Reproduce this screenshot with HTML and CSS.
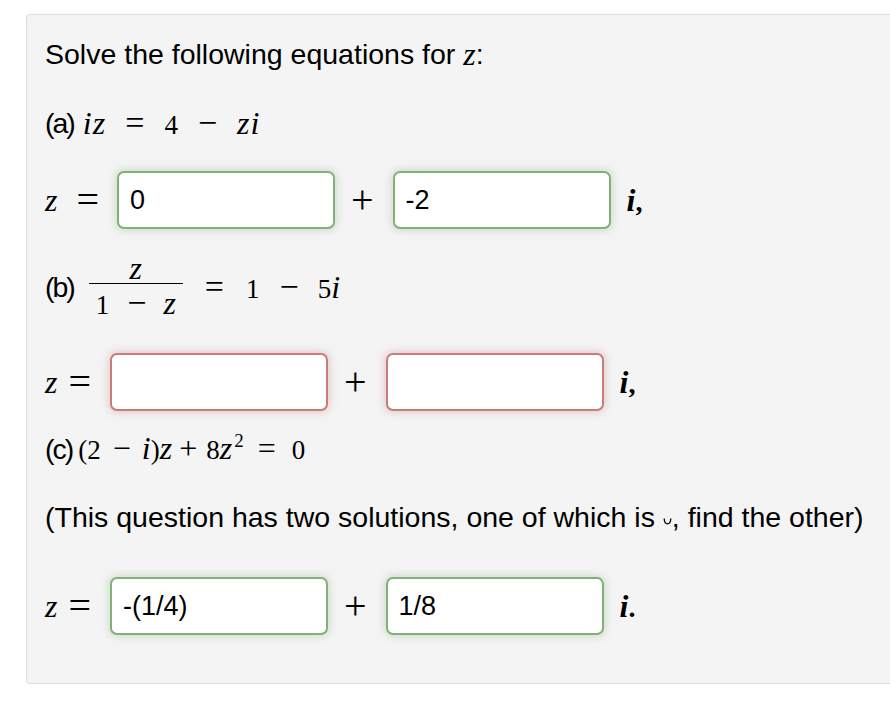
FILE: index.html
```html
<!DOCTYPE html>
<html>
<head>
<meta charset="utf-8">
<link rel="stylesheet" href="styles.css">
</head>
<body>
<div class="panel">
  <p class="row title">Solve the following equations for&nbsp;<span class="mi">z</span>:</p>

  <p class="row eq eq-a"><span class="label">(a)</span><span class="math"><span class="mi">i</span><span class="mi">z</span><span class="mo">=</span><span class="mn">4</span><span class="mo">−</span><span class="mi">z</span><span class="mi">i</span></span></p>

  <div class="row ans ans-a">
    <span class="mi">z</span><span class="mo eqa">=</span>
    <input class="box ok" type="text" value="0">
    <span class="mo plus">+</span>
    <input class="box ok" type="text" value="-2">
    <span class="tail"><span class="mi">i</span>,</span>
  </div>

  <div class="row eq eq-b"><span class="label">(b)</span>
    <span class="frac">
      <span class="num"><span class="mi">z</span></span>
      <span class="den"><span class="mn">1</span><span class="mo">−</span><span class="mi">z</span></span>
    </span>
    <span class="math"><span class="mo first">=</span><span class="mn">1</span><span class="mo">−</span><span class="mn">5</span><span class="mi">i</span></span>
  </div>

  <div class="row ans ans-b">
    <span class="mi">z</span><span class="mo eqb">=</span>
    <input class="box bad" type="text" value="">
    <span class="mo plus">+</span>
    <input class="box bad" type="text" value="">
    <span class="tail"><span class="mi">i</span>,</span>
  </div>

  <p class="row eq eq-c"><span class="label">(c)</span><span class="math"><span class="mn">(2</span><span class="mo m1">−</span><span class="mi">i</span><span class="mn">)</span><span class="mi">z</span><span class="mo m2">+</span><span class="mn">8</span><span class="mi">z</span><span class="sup">2</span><span class="mo m3">=</span><span class="mn">0</span></span></p>

  <p class="row note">(This question has two solutions, one of which is&nbsp;<svg class="cup" width="9" height="7" viewBox="0 0 9 7"><path d="M1.2 0.5 Q1.4 5.8 4.5 5.8 Q7.6 5.8 7.8 0.5" fill="none" stroke="#000" stroke-width="1.3"/></svg>, find the other)</p>

  <div class="row ans ans-c">
    <span class="mi">z</span><span class="mo eqb">=</span>
    <input class="box ok" type="text" value="-(1/4)">
    <span class="mo plus">+</span>
    <input class="box ok" type="text" value="1/8">
    <span class="tail"><span class="mi">i</span>.</span>
  </div>
</div>
</body>
</html>
```

FILE: styles.css
```css
html, body {
  margin: 0;
  padding: 0;
  background: #ffffff;
  overflow: hidden;
}

body {
  font-family: "Liberation Sans", Arial, sans-serif;
  color: #000;
}

.panel {
  margin: 14px 0 0 26px;
  width: 900px;
  height: 670px;
  box-sizing: border-box;
  border: 1px solid #dedede;
  border-right: none;
  border-radius: 4px 0 0 4px;
  background: #f4f4f4;
  padding: 0 0 0 18px;
  font-size: 28.5px;
}

.row {
  margin: 0;
  display: flex;
  align-items: center;
  white-space: nowrap;
}

.title {
  margin-top: 23px;
  height: 32px;
  line-height: 32px;
}

.label {
  letter-spacing: -2px;
}

.eq {
  line-height: 32px;
}

.eq-a {
  margin-top: 37px;
  height: 32px;
}

.ans-a {
  margin-top: 32px;
  height: 58px;
}

.eq-b {
  margin-top: 25px;
  height: 66px;
}

.ans-b {
  margin-top: 33px;
  height: 58px;
}

.eq-c {
  margin-top: 22px;
  height: 32px;
}

.note {
  margin-top: 36px;
  height: 32px;
  line-height: 32px;
}

.ans-c {
  margin-top: 44px;
  height: 58px;
}

/* math */
.math {
  display: inline-flex;
  align-items: baseline;
  font-family: "Liberation Serif", "Times New Roman", serif;
  font-size: 28px;
}

.mi {
  font-family: "Liberation Serif", "Times New Roman", serif;
  font-style: italic;
  font-size: 32px;
}

.mn {
  font-family: "Liberation Serif", "Times New Roman", serif;
  font-size: 27px;
}

.mo {
  font-family: "Liberation Serif", "Times New Roman", serif;
  font-size: 34px;
  margin: 0 20px;
  line-height: 1;
}

.eq-a .math {
  margin-left: 9px;
}

.eq-a .mi + .mi {
  margin-left: 1px;
}

/* (c) */
.eq-c .math {
  margin-left: 6px;
}

.eq-c .mo {
  font-size: 32px;
}

.mo.m1 {
  margin: 0 11px 0 12px;
}

.mo.m2 {
  margin: 0 9px 0 7px;
}

.mo.m3 {
  margin: 0 16px 0 14px;
}

.sup {
  font-family: "Liberation Serif", "Times New Roman", serif;
  font-size: 19px;
  line-height: 1;
  margin-left: 2px;
  position: relative;
  top: -12px;
}

/* fraction */
.frac {
  display: inline-flex;
  flex-direction: column;
  align-items: center;
  width: 94px;
  margin-left: 15px;
}

.num {
  line-height: 26px;
  padding-bottom: 1px;
  border-bottom: 1.5px solid #000;
  width: 100%;
  text-align: center;
}

.den {
  display: flex;
  align-items: baseline;
  justify-content: center;
  line-height: 28px;
  padding-top: 2px;
}

.den .mo {
  margin: 0 17px 0 18px;
}

.eq-b .math .mo {
  margin: 0 19px 0 20px;
}

.eq-b .math .mo.first {
  margin: 0 22px 0 22px;
}

/* answer rows */
.ans .mo {
  font-size: 40px;
}

.ans .mo.eqa {
  margin: 0 18px 0 19px;
}

.ans .mo.eqb {
  margin: 0 19px 0 11px;
}

.ans .mo.plus {
  margin: 0 19px 0 16px;
}

.box {
  width: 218px;
  height: 58px;
  box-sizing: border-box;
  margin: 0;
  padding: 0 11px;
  border-radius: 7px;
  background: #fff;
  font-family: "Liberation Sans", Arial, sans-serif;
  font-size: 27px;
  color: #000;
  outline: none;
}

.box.ok {
  border: 2px solid #82b077;
  box-shadow: 0 0 9px 1px rgba(120, 170, 110, 0.35);
}

.box.bad {
  border: 2px solid #c87d7b;
  box-shadow: 0 0 9px 1px rgba(195, 110, 110, 0.35);
}

.tail {
  margin-left: 16px;
  font-family: "Liberation Serif", "Times New Roman", serif;
  font-size: 28px;
  font-weight: bold;
}

.tail .mi {
  font-weight: bold;
}

.cup {
  display: inline-block;
  align-self: center;
  margin-top: 9px;
}
```
